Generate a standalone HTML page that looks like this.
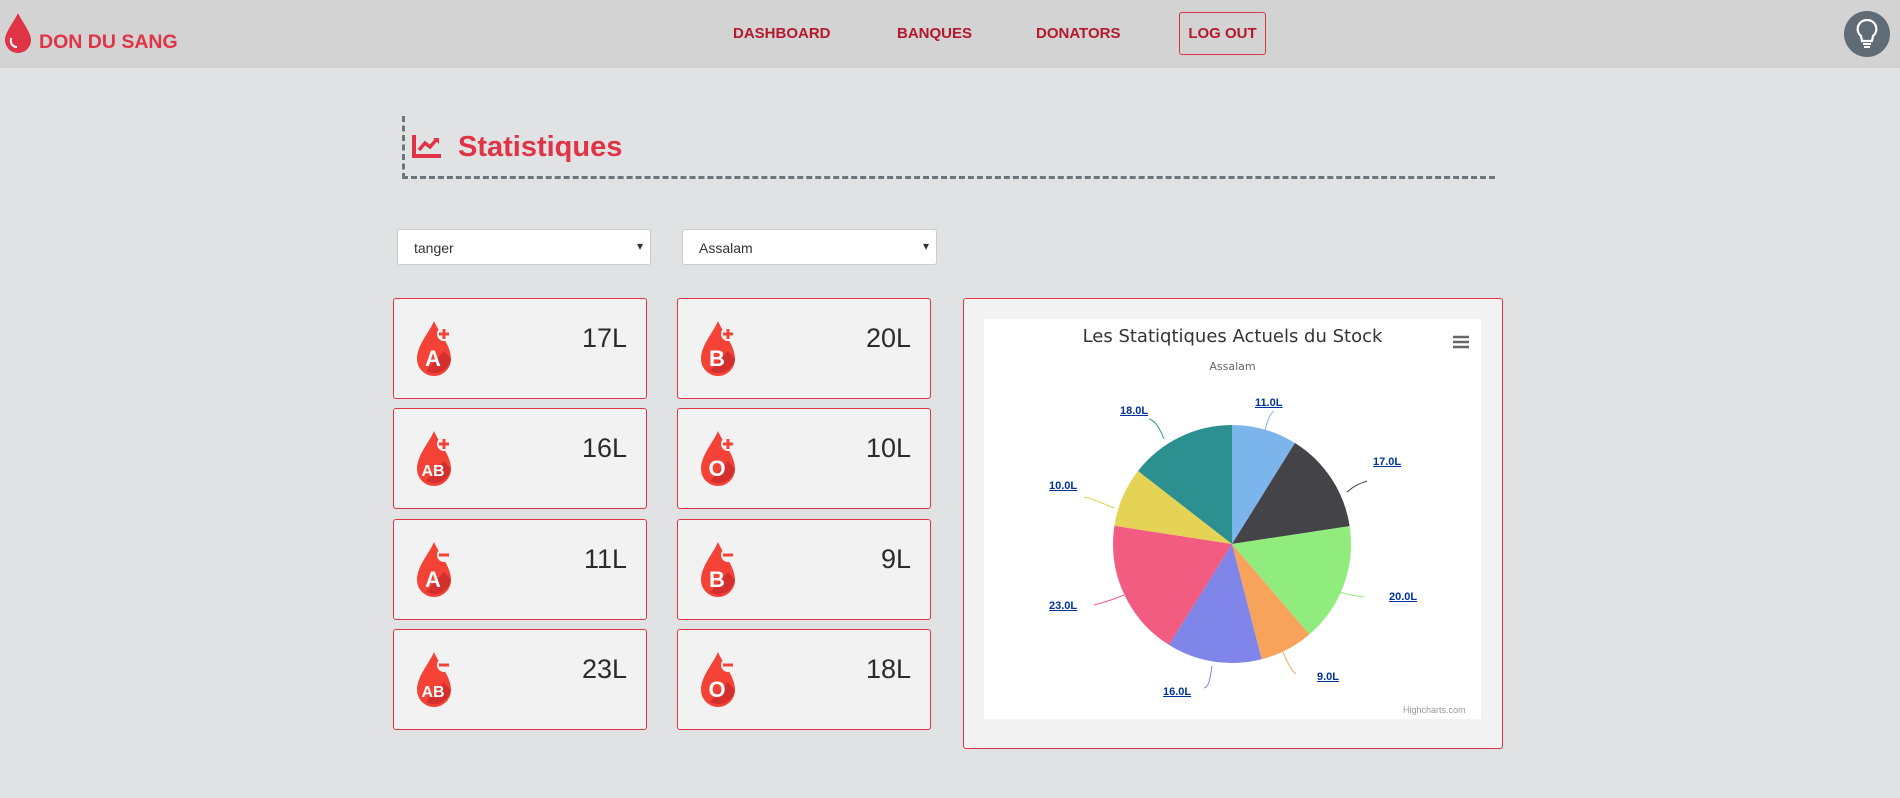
<!DOCTYPE html>
<html><head><meta charset="utf-8"><style>
*{margin:0;padding:0;box-sizing:border-box}
body{width:1900px;height:798px;background:#e1e2e4;font-family:"Liberation Sans",sans-serif;position:relative;overflow:hidden}
.nav{position:absolute;left:0;top:0;width:1900px;height:68px;background:#d3d3d3}
.a{position:absolute}
.nl{position:absolute;top:25px;color:#b5182b;font-weight:bold;font-size:15px}
.card{position:absolute;width:254px;height:101px;background:#f2f2f2;border:1px solid #dc3545;border-radius:3px}
.card svg{position:absolute;left:20px;top:20px}
.card .v{position:absolute;right:19px;top:24px;font-size:27px;color:#2b2b2b}
.sel{position:absolute;top:229px;height:36px;background:#fff;border:1px solid #ccc;border-radius:3px;font-size:14px;color:#333;padding:10px 16px}
.sel:after{content:"▾";position:absolute;right:7px;top:9px;font-size:12px}
.lb{position:absolute;font-size:11px;font-weight:bold;color:#003399;text-decoration:underline}
</style></head><body>
<div class="nav"></div>
<svg class="a" style="left:3px;top:12px" width="30" height="42" viewBox="0 0 30 42"><path d="M15 1 C11 10 2 20 2 28 A13 13 0 0 0 28 28 C28 20 19 10 15 1Z" fill="#e03446"/><path d="M8 26 C7 32 10 35 14 35" stroke="#fff" stroke-width="2" fill="none"/></svg>
<div class="a" style="left:39px;top:31px;color:#e03446;font-weight:bold;font-size:19.5px">DON DU SANG</div>
<div class="nl" style="left:733px">DASHBOARD</div>
<div class="nl" style="left:897px">BANQUES</div>
<div class="nl" style="left:1036px">DONATORS</div>
<div class="a" style="left:1179px;top:12px;width:87px;height:43px;border:1px solid #dc3545;border-radius:3px;color:#b5182b;font-weight:bold;font-size:15px;text-align:center;line-height:41px">LOG OUT</div>
<svg class="a" style="left:1844px;top:11px" width="46" height="46" viewBox="0 0 46 46"><circle cx="23" cy="23" r="23" fill="#5f6b75"/><path d="M23 9 A9 9 0 0 0 17 25 L18 30 H28 L29 25 A9 9 0 0 0 23 9Z" fill="none" stroke="#fff" stroke-width="2.2"/><path d="M19 33 H27 M20 36 H26" stroke="#fff" stroke-width="2"/></svg>

<div class="a" style="left:402px;top:116px;width:1093px;height:63px;border-left:3px dashed #6c757d;border-bottom:3px dashed #6c757d"></div>
<svg class="a" style="left:412px;top:134px" width="30" height="25" viewBox="0 0 30 25"><path d="M2 1 V22 H29" stroke="#e03446" stroke-width="4" fill="none"/><path d="M7 16 L13 9 L18 13 L25 5" stroke="#e03446" stroke-width="3.5" fill="none"/><path d="M21 4 H27 V10Z" fill="#e03446"/></svg>
<div class="a" style="left:458px;top:131px;color:#e03446;font-weight:bold;font-size:29px">Statistiques</div>

<div class="sel" style="left:397px;width:254px">tanger</div>
<div class="sel" style="left:682px;width:255px">Assalam</div>

<svg width="0" height="0" style="position:absolute"><defs>
<g id="drop"><path d="M20 2 C15 14 3 26 3 40 A17 17 0 0 0 37 40 C37 26 25 14 20 2Z" fill="#f44336"/><path d="M12 52 L30 32 L37 40 A17 17 0 0 1 12 52Z" fill="#d32f2f"/><circle cx="30" cy="15" r="7" fill="#f2f2f2"/></g>
</defs></svg>

<div class="card" style="left:393px;top:298px"><svg width="42" height="62" viewBox="0 0 42 62"><use href="#drop"/><path d="M30 10 V20 M25 15 H35" stroke="#f44336" stroke-width="3"/><text x="19" y="47" font-size="22" font-weight="bold" fill="#fff" text-anchor="middle" font-family="Liberation Sans">A</text></svg><div class="v">17L</div></div>
<div class="card" style="left:677px;top:298px"><svg width="42" height="62" viewBox="0 0 42 62"><use href="#drop"/><path d="M30 10 V20 M25 15 H35" stroke="#f44336" stroke-width="3"/><text x="19" y="47" font-size="22" font-weight="bold" fill="#fff" text-anchor="middle" font-family="Liberation Sans">B</text></svg><div class="v">20L</div></div>
<div class="card" style="left:393px;top:408px"><svg width="42" height="62" viewBox="0 0 42 62"><use href="#drop"/><path d="M30 10 V20 M25 15 H35" stroke="#f44336" stroke-width="3"/><text x="19" y="47" font-size="16" font-weight="bold" fill="#fff" text-anchor="middle" font-family="Liberation Sans">AB</text></svg><div class="v">16L</div></div>
<div class="card" style="left:677px;top:408px"><svg width="42" height="62" viewBox="0 0 42 62"><use href="#drop"/><path d="M30 10 V20 M25 15 H35" stroke="#f44336" stroke-width="3"/><text x="19" y="47" font-size="22" font-weight="bold" fill="#fff" text-anchor="middle" font-family="Liberation Sans">O</text></svg><div class="v">10L</div></div>
<div class="card" style="left:393px;top:519px"><svg width="42" height="62" viewBox="0 0 42 62"><use href="#drop"/><path d="M25 15 H35" stroke="#f44336" stroke-width="3"/><text x="19" y="47" font-size="22" font-weight="bold" fill="#fff" text-anchor="middle" font-family="Liberation Sans">A</text></svg><div class="v">11L</div></div>
<div class="card" style="left:677px;top:519px"><svg width="42" height="62" viewBox="0 0 42 62"><use href="#drop"/><path d="M25 15 H35" stroke="#f44336" stroke-width="3"/><text x="19" y="47" font-size="22" font-weight="bold" fill="#fff" text-anchor="middle" font-family="Liberation Sans">B</text></svg><div class="v">9L</div></div>
<div class="card" style="left:393px;top:629px"><svg width="42" height="62" viewBox="0 0 42 62"><use href="#drop"/><path d="M25 15 H35" stroke="#f44336" stroke-width="3"/><text x="19" y="47" font-size="16" font-weight="bold" fill="#fff" text-anchor="middle" font-family="Liberation Sans">AB</text></svg><div class="v">23L</div></div>
<div class="card" style="left:677px;top:629px"><svg width="42" height="62" viewBox="0 0 42 62"><use href="#drop"/><path d="M25 15 H35" stroke="#f44336" stroke-width="3"/><text x="19" y="47" font-size="22" font-weight="bold" fill="#fff" text-anchor="middle" font-family="Liberation Sans">O</text></svg><div class="v">18L</div></div>

<div class="a" style="left:963px;top:298px;width:540px;height:451px;background:#f2f2f2;border:1px solid #dc3545;border-radius:3px"></div>
<div class="a" style="left:984px;top:319px;width:497px;height:400px;background:#fff"></div>
<div class="a" style="left:984px;top:326px;width:497px;text-align:center;font-size:18px;color:#333;font-family:'DejaVu Sans',sans-serif">Les Statiqtiques Actuels du Stock</div>
<div class="a" style="left:984px;top:360px;width:497px;text-align:center;font-size:11px;color:#666;font-family:'DejaVu Sans',sans-serif">Assalam</div>
<svg class="a" style="left:1452px;top:334px" width="18" height="16"><path d="M1 3H17M1 8H17M1 13H17" stroke="#666" stroke-width="2.5"/></svg>
<svg class="a" style="left:984px;top:319px" width="497" height="400">
<g transform="translate(248,225) rotate(-90)" fill="none" stroke-width="119">
<circle r="59.5" stroke="#7cb5ec" stroke-dasharray="33.16 400" stroke-dashoffset="0"/>
<circle r="59.5" stroke="#434348" stroke-dasharray="51.25 400" stroke-dashoffset="-33.16"/>
<circle r="59.5" stroke="#90ed7d" stroke-dasharray="60.30 400" stroke-dashoffset="-84.41"/>
<circle r="59.5" stroke="#f7a35c" stroke-dasharray="27.13 400" stroke-dashoffset="-144.71"/>
<circle r="59.5" stroke="#8085e9" stroke-dasharray="48.24 400" stroke-dashoffset="-171.84"/>
<circle r="59.5" stroke="#f15c80" stroke-dasharray="69.34 400" stroke-dashoffset="-220.08"/>
<circle r="59.5" stroke="#e4d354" stroke-dasharray="30.15 400" stroke-dashoffset="-289.42"/>
<circle r="59.5" stroke="#2b908f" stroke-dasharray="54.27 400" stroke-dashoffset="-319.57"/>
</g>
<g fill="none" stroke-width="1">
<path d="M281 111 C284 100 286 95 290 92" stroke="#7cb5ec"/>
<path d="M363 173 C372 165 378 164 383 162" stroke="#434348"/>
<path d="M350 271 C360 275 366 276 380 278" stroke="#90ed7d"/>
<path d="M297 329 C303 342 306 350 312 355" stroke="#f7a35c"/>
<path d="M228 347 C226 360 225 368 220 369" stroke="#8085e9"/>
<path d="M140 276 C130 280 125 282 110 286" stroke="#f15c80"/>
<path d="M130 189 C120 185 110 180 100 178" stroke="#e4d354"/>
<path d="M180 120 C176 110 172 102 165 100" stroke="#2b908f"/>
</g>
</svg>
<div class="lb" style="left:1255px;top:397px">11.0L</div>
<div class="lb" style="left:1373px;top:456px">17.0L</div>
<div class="lb" style="left:1389px;top:591px">20.0L</div>
<div class="lb" style="left:1317px;top:671px">9.0L</div>
<div class="lb" style="left:1163px;top:686px">16.0L</div>
<div class="lb" style="left:1049px;top:600px">23.0L</div>
<div class="lb" style="left:1049px;top:480px">10.0L</div>
<div class="lb" style="left:1120px;top:405px">18.0L</div>
<div class="a" style="left:1403px;top:705px;font-size:9px;color:#999">Highcharts.com</div>
</body></html>
